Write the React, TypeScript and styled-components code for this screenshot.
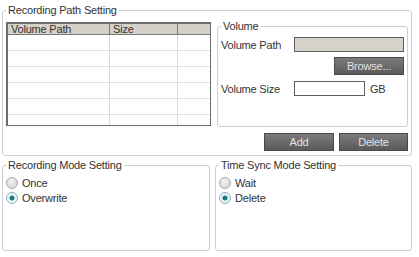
import React, { useState } from 'react';
import styled, { createGlobalStyle } from 'styled-components';

const GlobalStyle = createGlobalStyle`
  html, body {
    margin: 0;
    padding: 0;
    background: #ffffff;
  }
  body {
    font-family: "Liberation Sans", Arial, sans-serif;
    font-size: 11px;
    color: #3a3a3a;
  }
`;

const Page = styled.div`
  width: 419px;
  height: 257px;
  box-sizing: border-box;
  padding: 4px 7px 0 2px;
  display: flex;
  flex-direction: column;
  gap: 3px;
`;

const Group = styled.fieldset<{ $h: number }>`
  margin: 0;
  padding: 0 3px 4px 3px;
  min-width: 0;
  height: ${p => p.$h}px;
  box-sizing: border-box;
  border: 1px solid #cfcfcf;
  border-radius: 3px;
`;

const Legend = styled.legend`
  margin-left: 0;
  padding: 0 2px;
  font-size: 11px;
  line-height: 12px;
  letter-spacing: -0.2px;
  color: #333333;
`;

const TopRow = styled.div`
  display: flex;
  gap: 6px;
  padding-top: 4px;
`;

const TableBox = styled.div`
  margin-top: 2px;
  width: 205px;
  height: 104px;
  box-sizing: border-box;
  border: 1px solid #6c6c6c;
  border-top-width: 2px;
  border-left-width: 2px;
  overflow: hidden;
`;

const Grid = styled.table`
  width: 100%;
  border-collapse: collapse;
  table-layout: fixed;
`;

const Head = styled.th<{ $w?: number }>`
  width: ${p => (p.$w ? `${p.$w}px` : 'auto')};
  height: 10px;
  padding: 0 0 0 3px;
  background: #d5d1c9;
  border-right: 1px solid #7a7a7a;
  border-bottom: 1px solid #7a7a7a;
  font-weight: normal;
  text-align: left;
  line-height: 10px;
  letter-spacing: -0.2px;
  color: #333333;
  &:last-child { border-right: none; }
`;

const Cell = styled.td`
  height: 15px;
  padding: 0;
  border-right: 1px solid #dadada;
  border-bottom: 1px solid #e2e2e2;
  &:last-child { border-right: none; }
`;

const SubGroup = styled(Group)`
  flex: 1;
  padding: 0 3px 0 3px;
`;

const Form = styled.div`
  display: grid;
  grid-template-columns: 73px 1fr;
  align-items: center;
  padding-top: 5px;
`;

const Label = styled.span`
  color: #333333;
  letter-spacing: -0.2px;
`;

const Field = styled.div<{ $w?: number; $gray?: boolean }>`
  width: ${p => (p.$w ? `${p.$w}px` : '100%')};
  height: 15px;
  box-sizing: border-box;
  border: 1px solid #5e5e5e;
  background: ${p => (p.$gray ? '#d6d2ca' : '#ffffff')};
`;

const Right = styled.div`
  grid-column: 2;
  display: flex;
  justify-content: flex-end;
  margin: 5px 0 6px;
`;

const SizeRow = styled.div`
  display: flex;
  align-items: center;
  gap: 5px;
`;

const Button = styled.button<{ $w: number }>`
  width: ${p => p.$w}px;
  height: 18px;
  padding: 0;
  border: 1px solid #4a4a4a;
  background: linear-gradient(#7b7b7b, #5a5a5a);
  color: #e2e2e2;
  font-family: inherit;
  font-size: 11px;
  letter-spacing: -0.2px;
  cursor: pointer;
`;

const Actions = styled.div`
  display: flex;
  justify-content: flex-end;
  gap: 5px;
  margin-top: 6px;
`;

const Bottom = styled.div`
  display: flex;
  gap: 5px;
`;

const ModeGroup = styled(Group)`
  flex: 1;
  padding: 4px 3px 0 3px;
  &:last-child { flex: 0 0 197px; }
`;

const Option = styled.label`
  display: flex;
  align-items: center;
  gap: 4px;
  height: 15px;
  cursor: pointer;
  color: #333333;
  letter-spacing: -0.2px;
`;

const Dot = styled.span<{ $on: boolean }>`
  width: 12px;
  height: 12px;
  box-sizing: border-box;
  border-radius: 50%;
  border: 1px solid ${p => (p.$on ? '#8ab4c4' : '#a8a8a8')};
  background: ${p =>
    p.$on
      ? 'radial-gradient(circle, #1f7a80 0 2.2px, #e9f4f7 2.8px)'
      : 'radial-gradient(circle at 40% 35%, #f4f4f4, #cfcfcf)'};
`;

function Radio({ label, on, onPick }: { label: string; on: boolean; onPick: () => void }) {
  return (
    <Option onClick={onPick}>
      <Dot $on={on} />
      {label}
    </Option>
  );
}

export default function App() {
  const [mode, setMode] = useState('Overwrite');
  const [sync, setSync] = useState('Delete');
  const rows = [0, 1, 2, 3, 4, 5];

  return (
    <>
      <GlobalStyle />
      <Page>
        <Group $h={152}>
          <Legend>Recording Path Setting</Legend>
          <TopRow>
            <TableBox>
              <Grid>
                <thead>
                  <tr>
                    <Head $w={98}>Volume Path</Head>
                    <Head $w={64}>Size</Head>
                    <Head />
                  </tr>
                </thead>
                <tbody>
                  {rows.map(r => (
                    <tr key={r}>
                      <Cell />
                      <Cell />
                      <Cell />
                    </tr>
                  ))}
                </tbody>
              </Grid>
            </TableBox>
            <SubGroup $h={107}>
              <Legend>Volume</Legend>
              <Form>
                <Label>Volume Path</Label>
                <Field $gray />
                <Right>
                  <Button $w={70}>Browse...</Button>
                </Right>
                <Label>Volume Size</Label>
                <SizeRow>
                  <Field $w={71} />
                  <Label>GB</Label>
                </SizeRow>
              </Form>
            </SubGroup>
          </TopRow>
          <Actions>
            <Button $w={70}>Add</Button>
            <Button $w={69}>Delete</Button>
          </Actions>
        </Group>
        <Bottom>
          <ModeGroup $h={92}>
            <Legend>Recording Mode Setting</Legend>
            {['Once', 'Overwrite'].map(o => (
              <Radio key={o} label={o} on={mode === o} onPick={() => setMode(o)} />
            ))}
          </ModeGroup>
          <ModeGroup $h={92}>
            <Legend>Time Sync Mode Setting</Legend>
            {['Wait', 'Delete'].map(o => (
              <Radio key={o} label={o} on={sync === o} onPick={() => setSync(o)} />
            ))}
          </ModeGroup>
        </Bottom>
      </Page>
    </>
  );
}
